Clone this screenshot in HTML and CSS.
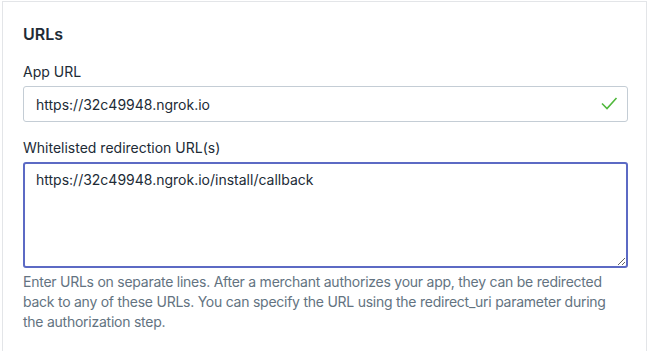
FILE: index.html
```html
<!DOCTYPE html>
<html lang="en">
<head>
    <meta charset="UTF-8">
    <title>App setup - URLs</title>
    <link rel="stylesheet" href="styles.css">
</head>
<body>
    <div class="card">
        <h2 class="card-title">URLs</h2>

        <!-- App URL -->
        <div class="field">
            <label class="label" for="app-url">App URL</label>
            <div class="input-wrap">
                <input class="input" id="app-url" type="text" value="https://32c49948.ngrok.io">
                <svg class="check" width="20" height="20" viewBox="0 0 20 20">
                    <path d="M3 10.5 L8 15.5 L17.5 5" fill="none" stroke="#50b83c" stroke-width="1.6"/>
                </svg>
            </div>
        </div>

        <!-- Redirection URLs -->
        <div class="field">
            <label class="label" for="redirects">Whitelisted redirection URL(s)</label>
            <textarea class="input textarea" id="redirects">https://32c49948.ngrok.io/install/callback</textarea>
            <p class="help">Enter URLs on separate lines. After a merchant authorizes your app, they can be redirected back to any of these URLs. You can specify the URL using the redirect_uri parameter during the authorization step.</p>
        </div>
    </div>
</body>
</html>
```

FILE: styles.css
```css
/* General */
body {
    margin: 0;
    padding: 1px 2px 0 2px;
    background: #fff;
    font-family: Inter, "Noto Sans", sans-serif;
    color: #212b36;
}

/* Card */
.card {
    border: 1px solid #e3e5e8;
    border-bottom: none;
    padding: 20px 18px 4px 20px;
}

.card-title {
    margin: 0 0 16px;
    font-size: 16px;
    line-height: 24px;
    font-weight: 600;
}

/* Fields */
.field {
    margin-bottom: 16px;
}

.label {
    display: block;
    font-size: 14px;
    line-height: 20px;
    margin-bottom: 4px;
}

.input-wrap {
    position: relative;
}

.input {
    display: block;
    box-sizing: border-box;
    width: 100%;
    height: 36px;
    margin: 0;
    padding: 5px 12px;
    border: 1px solid #c4cdd5;
    border-radius: 3px;
    font-family: inherit;
    font-size: 14px;
    line-height: 24px;
    color: #212b36;
    background: #fff;
    outline: none;
}

.check {
    position: absolute;
    right: 9px;
    top: 7px;
}

.textarea {
    height: 106px;
    padding: 4px 11px;
    border: 2px solid #5c6ac4;
    resize: vertical;
}

.help {
    margin: 4px 0 0;
    font-size: 14px;
    line-height: 20px;
    letter-spacing: -0.25px;
    color: #637381;
}
```
